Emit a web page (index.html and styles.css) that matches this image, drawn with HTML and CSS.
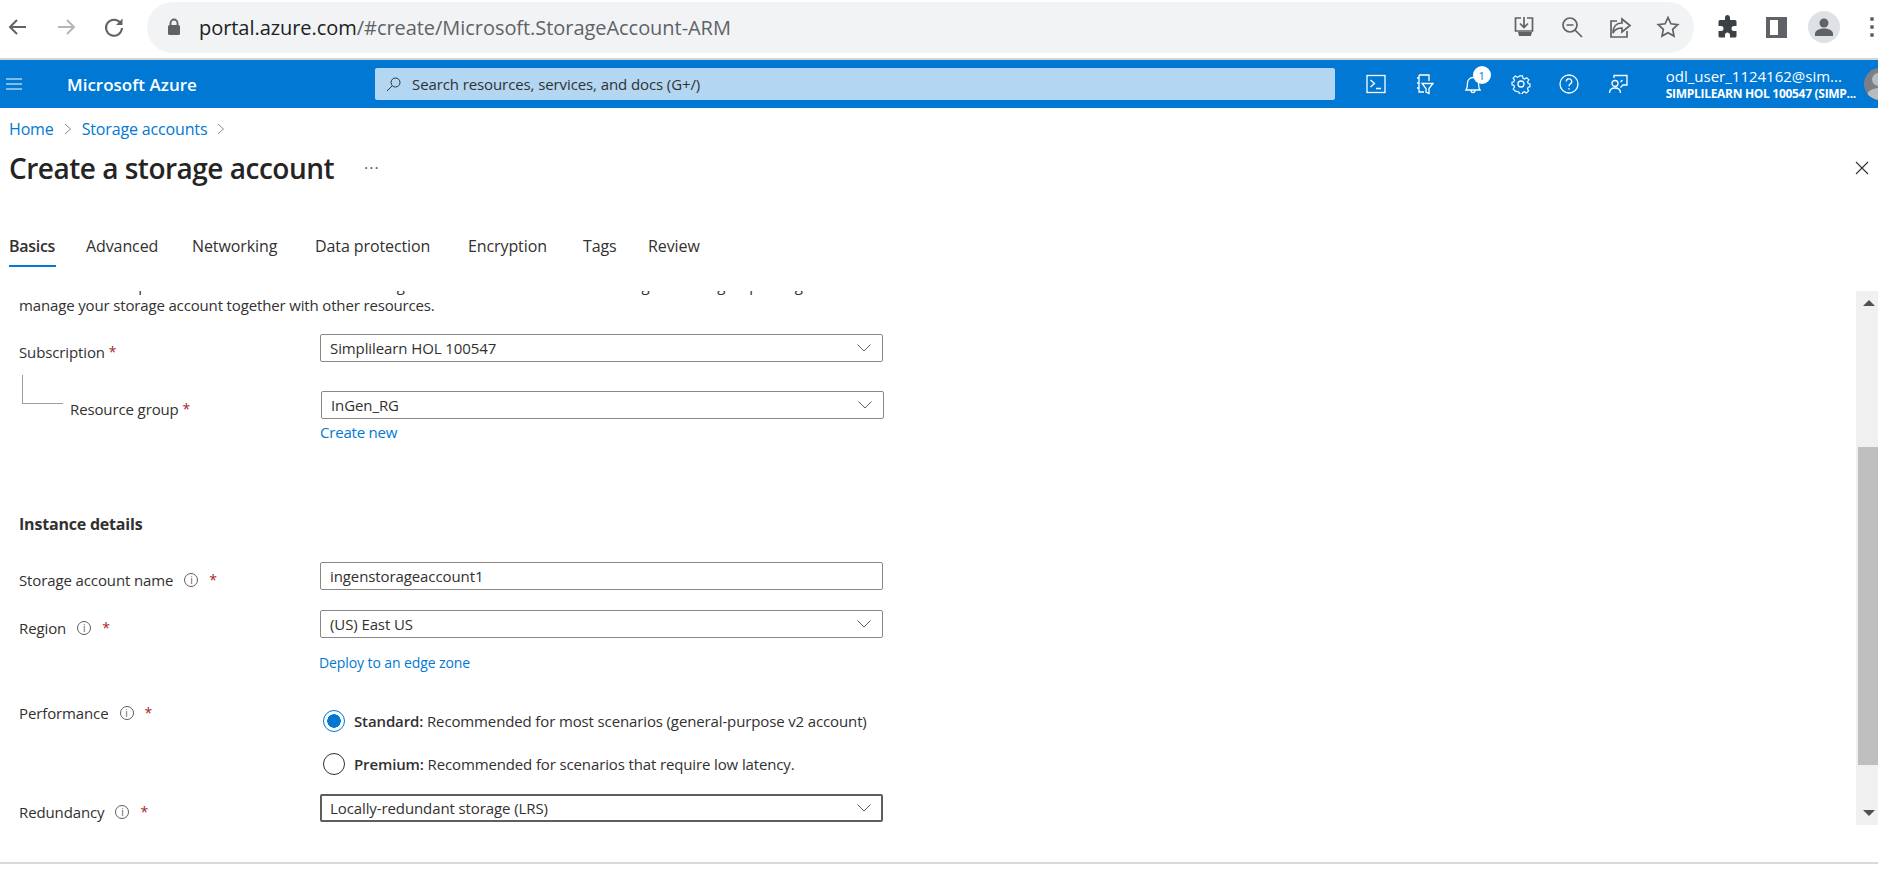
FILE: index.html
```html
<!DOCTYPE html>
<html lang="en">
<head>
<meta charset="utf-8">
<title>Create a storage account</title>
<link rel="stylesheet" href="styles.css">
</head>
<body>
<div class="browser">
  <div class="nav-group">
    <span class="cell"><svg width="24" height="24" viewBox="0 0 24 24" class="ic"><path d="M20 12H4M11 5l-7 7 7 7"/></svg></span>
    <span class="cell"><svg width="24" height="24" viewBox="0 0 24 24" class="ic light"><path d="M4 12h16M13 5l7 7-7 7"/></svg></span>
    <span class="cell"><svg width="24" height="24" viewBox="0 0 24 24" class="ic"><path d="M18.5 8A8 8 0 1 0 20 13"/><path class="fill" d="M20.5 3.5v6.5H14z"/></svg></span>
  </div>
  <div class="omnibox">
    <svg class="lock" width="14" height="18" viewBox="0 0 14 18"><path d="M3.5 7V5a3.5 3.5 0 0 1 7 0v2" fill="none" stroke="#5f6368" stroke-width="1.8"/><rect x="1" y="7" width="12" height="10" rx="1.5" fill="#5f6368"/></svg>
    <span class="url"><span class="url-host">portal.azure.com</span>/#create/Microsoft.StorageAccount-ARM</span>
    <span class="omni-actions">
      <span class="cell"><svg width="24" height="24" viewBox="0 0 24 24" class="ic thin"><path d="M9 3H3.5v13h17V3H15M12 2v10M8 8.500l4 4 4-4"/><path class="fill" d="M6 17h14l-1 4H7z"/></svg></span>
      <span class="cell"><svg width="24" height="24" viewBox="0 0 24 24" class="ic thin"><circle cx="10" cy="10" r="7"/><path d="M6.500 10h7M15 15l7 7"/></svg></span>
      <span class="cell"><svg width="24" height="24" viewBox="0 0 24 24" class="ic thin"><path d="M9 6H3v16h16v-6"/><path d="M14 4l8 6.500-8 6.500v-4c-4 0-7 1-9 5 0-6 3-10 9-10z"/></svg></span>
      <span class="cell"><svg width="24" height="24" viewBox="0 0 24 24" class="ic thin"><path d="M12 2.500l2.900 6.300 6.800.8-5 4.700 1.300 6.800-6-3.400-6 3.400 1.300-6.800-5-4.700 6.800-.8z"/></svg></span>
    </span>
  </div>
  <div class="ext-group">
    <span class="cell"><svg width="24" height="24" viewBox="0 0 24 24"><path fill="#3c4043" d="M9 2.500a2.500 2.500 0 0 1 5 0V5h5a1.500 1.500 0 0 1 1.500 1.500V11h-2.500a2.500 2.500 0 0 0 0 5h2.500v5a1.500 1.500 0 0 1-1.500 1.500h-5V20a2.500 2.500 0 0 0-5 0v2.500H4a1.500 1.500 0 0 1-1.500-1.500v-5H5a2.500 2.500 0 0 0 0-5H2.500V6.500A1.500 1.500 0 0 1 4 5h5z"/></svg></span>
    <span class="cell"><svg width="24" height="24" viewBox="0 0 24 24"><path fill="#5f6368" fill-rule="evenodd" d="M2 2h21v21H2zM6 5v15h8V5z"/></svg></span>
    <span class="cell"><span class="profile"><svg width="22" height="22" viewBox="0 0 22 22"><circle cx="11" cy="7" r="4.500" fill="#5f6368"/><path fill="#5f6368" d="M2 20v-2c0-4 5-5.500 9-5.500s9 1.500 9 5.500v2z"/></svg></span></span>
    <span class="dots"><i></i><i></i><i></i></span>
  </div>
</div>

<header class="azure">
  <svg class="burger" width="16" height="12" viewBox="0 0 16 12"><path d="M0 1h16M0 6h16M0 11h16" stroke="#fff" stroke-width="1.200"/></svg>
  <span class="brand">Microsoft Azure</span>
  <div class="search">
    <svg width="15" height="15" viewBox="0 0 15 15" fill="none" stroke="#323130" stroke-width="1"><circle cx="9.500" cy="5.500" r="4.500"/><path d="M6.300 8.700L1 14"/></svg>
    <span>Search resources, services, and docs (G+/)</span>
  </div>
  <div class="portal-icons">
    <span class="pi"><svg width="20" height="20" viewBox="0 0 20 20" class="wh"><rect x="1" y="1.500" width="18" height="17"/><path d="M4.500 6l4 3.500-4 3.500M10 14.500h5"/></svg></span>
    <span class="pi"><svg width="20" height="22" viewBox="0 0 20 22" class="wh"><path d="M5 2h10v6M5 2v17h5M3 5h2M3 10h2M3 15h2M8 10.500h11l-4 5v5l-3-1.500v-3.500z"/></svg></span>
    <span class="pi bell"><svg width="20" height="22" viewBox="0 0 20 22" class="wh"><path d="M3 17c1.500-2 1.500-4 1.500-7a5.500 5.500 0 0 1 11 0c0 3 0 5 1.500 7zM8 17.500a2 2 0 0 0 4 0"/></svg><span class="badge">1</span></span>
    <span class="pi"><svg width="20" height="20" viewBox="0 0 20 20" class="wh"><circle cx="10" cy="10" r="3"/><path d="M8.300 1h3.400l.5 2.700 1.800.8 2.300-1.500 2.400 2.400-1.500 2.300.8 1.800 2 .5v3l-2 .5-.8 1.800 1.200 2.300-2.400 2.400-2.300-1.500-1.800.8-.5 1.900H8.300l-.5-2-1.800-.8L3.700 18l-2.400-2.400 1.500-2.300-.8-1.800L0 11V8l2-.5.800-1.800L1.300 3.400 3.700 1 6 2.500l1.800-.8z" transform="translate(1 1) scale(.9)"/></svg></span>
    <span class="pi"><svg width="20" height="20" viewBox="0 0 20 20" class="wh"><circle cx="10" cy="10" r="9"/><path d="M7.300 7.500a2.700 2.700 0 1 1 4 2.400c-1 .6-1.300 1-1.300 2.300M10 14v1.600"/></svg></span>
    <span class="pi"><svg width="20" height="20" viewBox="0 0 20 20" class="wh"><path d="M6 4V1.500h13V11h-4l-2.500 2.500M12.500 8l2-2"/><circle cx="7" cy="9.500" r="3"/><path d="M1.500 19c0-3.500 2-5 5.500-5s5.500 1.500 5.500 5"/></svg></span>
  </div>
  <div class="account">
    <span class="acct-name">odl_user_1124162@sim...</span>
    <span class="acct-tenant">SIMPLILEARN HOL 100547 (SIMP...</span>
  </div>
  <span class="avatar"><i class="av-head"></i><i class="av-body"></i></span>
</header>

<main class="page">
  <nav class="crumbs">
    <a>Home</a>
    <svg width="8" height="12" viewBox="0 0 8 12" class="crumb-sep"><path d="M1 1l5.500 5L1 11"/></svg>
    <a>Storage accounts</a>
    <svg width="8" height="12" viewBox="0 0 8 12" class="crumb-sep"><path d="M1 1l5.500 5L1 11"/></svg>
  </nav>
  <div class="title-row">
    <h1>Create a storage account</h1>
    <span class="more">···</span>
    <svg class="close" width="14" height="14" viewBox="0 0 14 14"><path d="M1 1l12 12M13 1L1 13" stroke="#323130" stroke-width="1.100"/></svg>
  </div>
  <div class="tabs">
    <span class="tab active">Basics</span>
    <span class="tab">Advanced</span>
    <span class="tab">Networking</span>
    <span class="tab">Data protection</span>
    <span class="tab">Encryption</span>
    <span class="tab">Tags</span>
    <span class="tab">Review</span>
  </div>

  <div class="pane">
    <div class="form">
      <p class="intro">Select the subscription in which to create the new storage account. Choose a new or existing resource group to organize and<br>manage your storage account together with other resources.</p>

      <div class="row first">
        <label class="lbl">Subscription <b class="req">*</b></label>
        <div class="select"><span>Simplilearn HOL 100547</span><svg class="chev" width="14" height="8" viewBox="0 0 14 8"><path d="M.5.500l6.500 6.500L13.500.500"/></svg></div>
      </div>

      <div class="row rg">
        <label class="lbl child">Resource group <b class="req">*</b></label>
        <div class="select shift"><span>InGen_RG</span><svg class="chev" width="14" height="8" viewBox="0 0 14 8"><path d="M.5.500l6.500 6.500L13.500.500"/></svg></div>
      </div>
      <a class="link create">Create new</a>

      <h2>Instance details</h2>

      <div class="row storage">
        <label class="lbl">Storage account name<span class="info">i</span><b class="req gap">*</b></label>
        <div class="select"><span>ingenstorageaccount1</span></div>
      </div>

      <div class="row region">
        <label class="lbl">Region<span class="info">i</span><b class="req gap">*</b></label>
        <div class="select"><span>(US) East US</span><svg class="chev" width="14" height="8" viewBox="0 0 14 8"><path d="M.5.500l6.500 6.500L13.500.500"/></svg></div>
      </div>
      <a class="link deploy">Deploy to an edge zone</a>

      <div class="row perf">
        <label class="lbl">Performance<span class="info">i</span><b class="req gap">*</b></label>
        <div class="radios">
          <div class="radio-line"><span class="radio on"></span><span><b>Standard:</b> Recommended for most scenarios (general-purpose v2 account)</span></div>
          <div class="radio-line"><span class="radio"></span><span><b>Premium:</b> Recommended for scenarios that require low latency.</span></div>
        </div>
      </div>

      <div class="row redundancy">
        <label class="lbl">Redundancy<span class="info">i</span><b class="req gap">*</b></label>
        <div class="select focus"><span>Locally-redundant storage (LRS)</span><svg class="chev" width="14" height="8" viewBox="0 0 14 8"><path d="M.5.500l6.500 6.500L13.500.500"/></svg></div>
      </div>
    </div>

    <div class="scrollbar">
      <span class="arrow up"></span>
      <span class="thumb"></span>
      <span class="arrow down"></span>
    </div>
  </div>
  <footer class="foot"></footer>
</main>
</body>
</html>
```
FILE: styles.css
```css
* { box-sizing: border-box; }
html, body { margin: 0; padding: 0; height: 871px; overflow: hidden; background: #fff; }
body { font-family: "Open Sans", "Liberation Sans", sans-serif; color: #323130; font-size: 15px; }
svg { display: block; flex: none; }

.browser { height: 58px; display: flex; align-items: center; padding-bottom: 4px; background: #fff; }
.nav-group { display: flex; gap: 12px; width: 132px; flex: none; }
.cell { width: 36px; height: 36px; display: flex; align-items: center; justify-content: center; flex: none; }
.ic { fill: none; stroke: #5f6368; stroke-width: 2; }
.ic.thin { stroke-width: 1.700; }
.ic.light { stroke: #b4b6b9; }
.ic .fill { fill: #5f6368; stroke: none; }
.omnibox { margin-left: 15px; width: 1547px; height: 51px; border-radius: 26px; background: #f1f3f4; display: flex; align-items: center; padding: 0 8px 0 20px; flex: none; }
.url { margin-left: 18px; font-size: 20px; color: #5f6368; letter-spacing: -.05px; white-space: nowrap; }
.url-host { color: #202124; }
.omni-actions { margin-left: auto; display: flex; gap: 12px; }
.ext-group { margin-left: 16px; display: flex; gap: 12px; align-items: center; flex: none; }
.profile { width: 32px; height: 32px; border-radius: 50%; background: #dee1e6; display: flex; align-items: center; justify-content: center; }
.dots { display: flex; flex-direction: column; gap: 4px; margin-left: 16px; }
.dots i { width: 4px; height: 4px; border-radius: 50%; background: #5f6368; display: block; }

.azure { height: 50px; border-top: 2px solid #d4d4d4; background: #0078d4; display: flex; align-items: center; color: #fff; overflow: hidden; }
.burger { margin-left: 6px; }
.brand { margin-left: 45px; width: 308px; flex: none; font-size: 17px; font-weight: 600; white-space: nowrap; }
.search { width: 960px; flex: none; height: 32px; background: #b3d6f2; border-radius: 2px; display: flex; align-items: center; gap: 11px; padding-left: 11px; color: #323130; font-size: 15px; letter-spacing: -.1px; }
.portal-icons { display: flex; margin-left: 17px; flex: none; }
.pi { width: 48.300px; height: 48px; display: flex; align-items: center; justify-content: center; position: relative; }
.wh { fill: none; stroke: #fff; stroke-width: 1.300; }
.badge { position: absolute; left: 24px; top: 6px; width: 18px; height: 18px; border-radius: 50%; background: #fff; color: #0078d4; font-size: 11px; display: flex; align-items: center; justify-content: center; }
.account { margin-left: 24px; width: 199px; display: flex; flex-direction: column; white-space: nowrap; flex: none; }
.acct-name { font-size: 15px; line-height: 19px; }
.acct-tenant { font-size: 12px; line-height: 16px; font-weight: 700; letter-spacing: -.3px; }
.avatar { width: 32px; height: 32px; border-radius: 50%; background: #7a7f87; flex: none; position: relative; overflow: hidden; margin-left: -1px; }
.av-head { position: absolute; left: 8px; top: 5px; width: 13px; height: 13px; border-radius: 50%; background: #b8bcc2; }
.av-body { position: absolute; left: 3px; top: 20px; width: 24px; height: 16px; border-radius: 50%; background: #b8bcc2; }

.page { display: flex; flex-direction: column; height: 763px; }
.crumbs { height: 42px; padding: 0 0 0 9px; display: flex; align-items: center; gap: 10px; }
.crumbs a { color: #0078d4; font-size: 16px; letter-spacing: -.15px; }
.crumb-sep { fill: none; stroke: #8a8886; stroke-width: 1; }
.title-row { height: 36px; display: flex; align-items: center; padding: 0 9px; }
h1 { margin: 0; font-size: 28px; font-weight: 600; color: #252423; letter-spacing: -.5px; white-space: nowrap; width: 355px; }
.more { font-size: 16px; letter-spacing: 1px; color: #605e5c; }
.close { margin-left: auto; }
.tabs { margin-top: 46px; height: 34px; margin-left: 9px; display: grid; grid-template-columns: 77px 106px 123px 153px 115px 65px 60px; justify-content: start; }
.tab { font-size: 16px; letter-spacing: -.1px; line-height: 20px; padding-top: 4px; white-space: nowrap; position: relative; color: #323130; }
.tab.active { font-weight: 600; letter-spacing: -.3px; }
.tab.active::after { content: ""; position: absolute; left: 0; top: 33px; width: 47px; height: 2px; background: #0078d4; }

.pane { margin-top: 25px; height: 571px; display: flex; overflow: hidden; }
.form { flex: 1; padding-left: 19px; min-width: 0; }
.intro { margin: -16px 0 0; font-size: 15px; line-height: 20px; letter-spacing: -.15px; color: #323130; white-space: nowrap; }
.row { display: grid; grid-template-columns: 301px 564px; position: relative; }
.lbl { padding-top: 8px; line-height: 20px; display: flex; align-items: center; align-self: start; font-size: 15px; letter-spacing: -.12px; color: #323130; white-space: pre; }
.req { color: #a4262c; font-weight: 400; font-size: 14px; }
.req.gap { margin-left: 11px; }
.info { width: 14px; height: 14px; border: 1px solid #605e5c; border-radius: 50%; margin-left: 11px; font-size: 10px; line-height: 12px; text-align: center; color: #605e5c; }
.child { padding-left: 51px; }
.child::before { content: ""; position: absolute; left: 3px; top: -16px; width: 40px; height: 28px; border-left: 1px solid #a19f9d; border-bottom: 1px solid #a19f9d; }
.select { height: 28px; border: 1px solid #8a8886; border-radius: 2px; display: flex; align-items: center; justify-content: space-between; padding: 0 11px 0 9px; background: #fff; font-size: 15px; letter-spacing: -.1px; color: #323130; width: 563px; }
.select.shift { margin-left: 1px; }
.select.focus { border: 2px solid #605e5c; padding-left: 8px; padding-right: 10px; }
.chev { fill: none; stroke: #605e5c; stroke-width: 1; }
.first { margin-top: 19px; }
.rg { margin-top: 29px; }
.link { display: block; color: #0078d4; line-height: 20px; }
.create { margin: 3px 0 0 301px; font-size: 15px; letter-spacing: -.2px; }
h2 { margin: 72px 0 0; font-size: 16px; line-height: 20px; font-weight: 700; letter-spacing: -.2px; }
.storage { margin-top: 28px; }
.region { margin-top: 20px; }
.deploy { margin: 15px 0 0 300px; font-size: 14px; letter-spacing: -.1px; }
.perf { margin-top: 22px; }
.radios { padding: 15px 0 0 3px; display: flex; flex-direction: column; gap: 21px; }
.radio-line { display: flex; align-items: center; gap: 9px; height: 22px; font-size: 15px; letter-spacing: -.13px; white-space: nowrap; }
.radio-line b { font-weight: 600; }
.radio { width: 22px; height: 22px; border: 1.500px solid #323130; border-radius: 50%; flex: none; background: #fff; }
.radio.on { border-color: #0078d4; background: radial-gradient(circle, #0078d4 0 6.500px, #fff 7px); }
.redundancy { margin-top: 19px; }

.scrollbar { width: 22px; height: 534px; background: #f0f0f0; display: flex; flex-direction: column; align-items: flex-end; flex: none; position: relative; }
.thumb { width: 20px; height: 318px; background: #bfbfbf; margin-top: 156px; }
.arrow { position: absolute; left: 7px; width: 0; height: 0; border-left: 6px solid transparent; border-right: 6px solid transparent; }
.arrow.up { top: 9px; border-bottom: 6px solid #505050; }
.arrow.down { bottom: 9px; border-top: 6px solid #505050; }

.foot { height: 9px; border-top: 2px solid #d9d9d9; }
```
